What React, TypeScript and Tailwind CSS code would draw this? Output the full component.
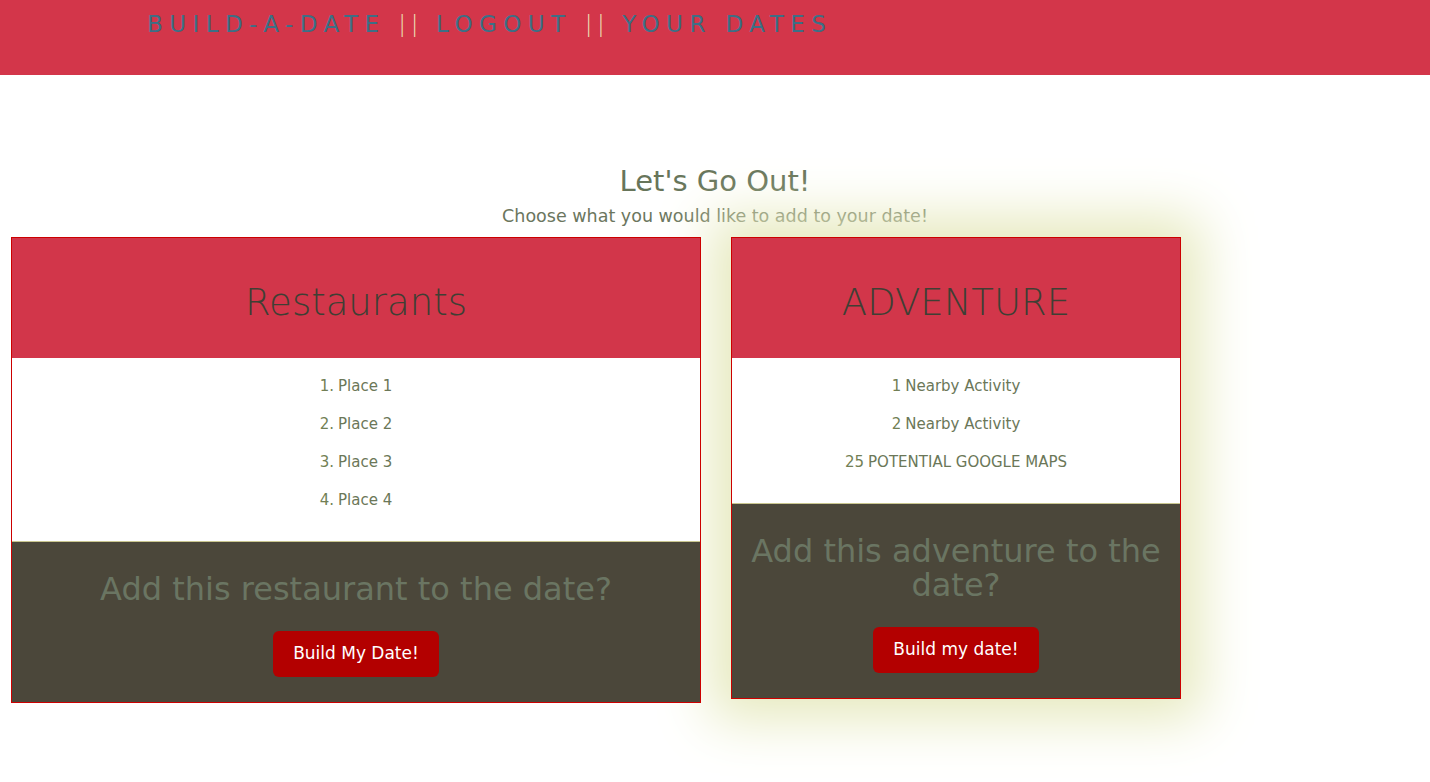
const font = { fontFamily: '"DejaVu Sans", "Noto Sans", sans-serif' };

const Card = ({
  title,
  items,
  question,
  button,
  width,
  glow,
}: {
  title: string;
  items: [string, string][];
  question: string;
  button: string;
  width: string;
  glow?: boolean;
}) => (
  <div
    className={`${width} relative flex flex-col border border-[#cc0000] ${
      glow ? "shadow-[0_0_52px_20px_#e6e9bd]" : "z-10"
    }`}
  >
    {/* Header */}
    <div className="flex h-[120px] items-center justify-center bg-[#d2364a] pt-[9px]">
      <h3 className="text-[37px] font-light text-[#3f3f34]">{title}</h3>
    </div>

    {/* List */}
    <ul className="bg-white pt-[9px] pb-[22px]">
      {items.map(([n, label]) => (
        <li
          key={label + n}
          className="flex h-[38px] items-center justify-center text-[15px] text-[#6b7758]"
        >
          <span className="mr-1 text-[#727f55]">{n}</span>
          {label}
        </li>
      ))}
    </ul>

    {/* Action */}
    <div className="flex flex-1 flex-col items-center border-t border-[#c9c68f] bg-[#4b473a] px-4 pt-[30px] pb-[25px]">
      <p className="text-center text-[32px] leading-[34px] text-[#6a7562]">
        {question}
      </p>
      <button className="mt-[25px] h-[46px] w-[166px] rounded-md bg-[#b30000] text-[17px] text-white">
        {button}
      </button>
    </div>
  </div>
);

export default function App() {
  return (
    <div className="min-h-screen bg-white" style={font}>
      {/* Nav */}
      <header className="h-[75px] bg-[#d3364a] pl-[147px] pt-[10px]">
        <nav className="flex items-center gap-[13px] text-[23px] leading-[28px] tracking-[0.28em] text-[#3c6f86]">
          <span>BUILD-A-DATE</span>
          <span className="font-extralight tracking-[0.2em] text-[#ebdcb0]">||</span>
          <span>LOGOUT</span>
          <span className="font-extralight tracking-[0.2em] text-[#ebdcb0]">||</span>
          <span>YOUR DATES</span>
        </nav>
      </header>

      {/* Intro */}
      <div className="mt-[88px] flex flex-col items-center">
        <h2 className="text-[29px] leading-[36px] text-[#67755a]">Let's Go Out!</h2>
        <p className="mt-[5px] text-[17.5px] leading-[24px] text-[#6b765e]">
          Choose what you would like to add to your date!
        </p>
      </div>

      {/* Cards */}
      <div className="mt-[9px] flex items-start gap-[30px] pl-[11px]">
        <Card
          width="w-[690px]"
          title="Restaurants"
          items={[
            ["1.", "Place 1"],
            ["2.", "Place 2"],
            ["3.", "Place 3"],
            ["4.", "Place 4"],
          ]}
          question="Add this restaurant to the date?"
          button="Build My Date!"
        />
        <Card
          width="w-[450px]"
          glow
          title="ADVENTURE"
          items={[
            ["1", "Nearby Activity"],
            ["2", "Nearby Activity"],
            ["25", "POTENTIAL GOOGLE MAPS"],
          ]}
          question="Add this adventure to the date?"
          button="Build my date!"
        />
      </div>
    </div>
  );
}
